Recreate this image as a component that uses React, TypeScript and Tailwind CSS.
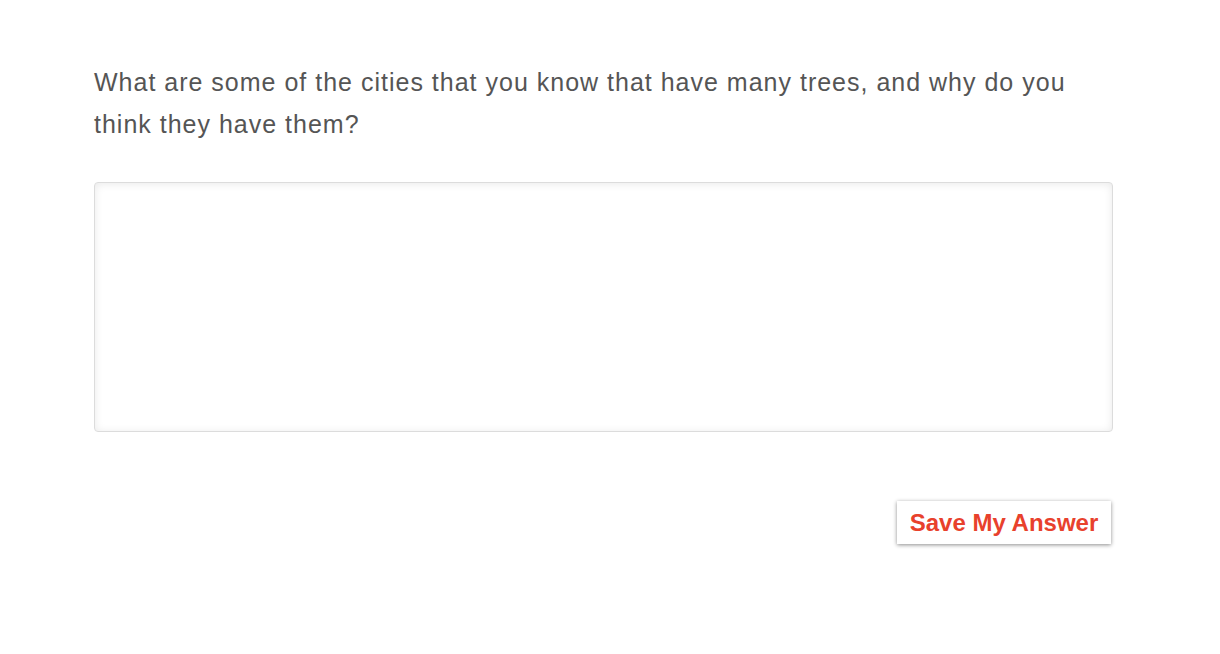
export default function App() {
  return (
    <div className="min-h-[654px] w-full bg-white" style={{ fontFamily: '"Liberation Sans", Arial, sans-serif' }}>
      <div className="ml-[94px] w-[1019px] pt-[61px]">
        <p className="text-[25px] leading-[42px] tracking-[1px] text-[#555555]">
          What are some of the cities that you know that have many trees, and why do you think they have them?
        </p>
        <textarea
          className="mt-[37px] block h-[250px] w-[1019px] resize-none rounded-[4px] border border-[#dcdcdc] bg-white shadow-[inset_0_1px_8px_rgba(0,0,0,0.09)] outline-none"
        />
        <div className="mt-[69px] flex justify-end pr-[2px]">
          <button className="h-[43px] w-[214px] bg-white text-[24px] font-bold text-[#e8412c] shadow-[0_1px_4px_rgba(0,0,0,0.45)]">
            Save My Answer
          </button>
        </div>
      </div>
    </div>
  );
}
